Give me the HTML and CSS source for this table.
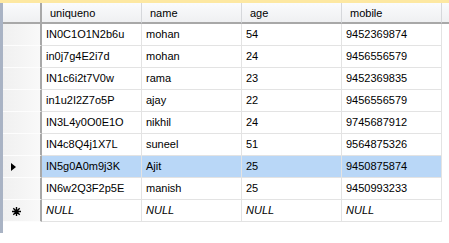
FILE: index.html
```html
<!DOCTYPE html>
<html lang="en">
<head>
    <meta charset="UTF-8">
    <title>Results</title>
    <link rel="stylesheet" href="styles.css">
</head>
<body>
    <div class="tab-line"></div>
    <div class="pane">
        <table class="results">
            <colgroup>
                <col class="col-rowhead">
                <col class="col-data">
                <col class="col-data">
                <col class="col-data">
                <col class="col-data">
                <col class="col-filler">
            </colgroup>
            <thead>
                <tr>
                    <th class="corner"></th>
                    <th>uniqueno</th>
                    <th>name</th>
                    <th>age</th>
                    <th>mobile</th>
                    <th class="filler"></th>
                </tr>
            </thead>
            <tbody>
                <tr>
                    <td class="rowhead"></td>
                    <td>IN0C1O1N2b6u</td><td>mohan</td><td>54</td><td>9452369874</td>
                    <td class="filler"></td>
                </tr>
                <tr>
                    <td class="rowhead"></td>
                    <td>in0j7g4E2i7d</td><td>mohan</td><td>24</td><td>9456556579</td>
                    <td class="filler"></td>
                </tr>
                <tr>
                    <td class="rowhead"></td>
                    <td>IN1c6i2t7V0w</td><td>rama</td><td>23</td><td>9452369835</td>
                    <td class="filler"></td>
                </tr>
                <tr>
                    <td class="rowhead"></td>
                    <td>in1u2I2Z7o5P</td><td>ajay</td><td>22</td><td>9456556579</td>
                    <td class="filler"></td>
                </tr>
                <tr>
                    <td class="rowhead"></td>
                    <td>IN3L4y0O0E1O</td><td>nikhil</td><td>24</td><td>9745687912</td>
                    <td class="filler"></td>
                </tr>
                <tr>
                    <td class="rowhead"></td>
                    <td>IN4c8Q4j1X7L</td><td>suneel</td><td>51</td><td>9564875326</td>
                    <td class="filler"></td>
                </tr>
                <tr class="selected">
                    <td class="rowhead"><span class="current-arrow"></span></td>
                    <td>IN5g0A0m9j3K</td><td>Ajit</td><td>25</td><td>9450875874</td>
                    <td class="filler"></td>
                </tr>
                <tr>
                    <td class="rowhead"></td>
                    <td>IN6w2Q3F2p5E</td><td>manish</td><td>25</td><td>9450993233</td>
                    <td class="filler"></td>
                </tr>
                <tr class="new-row">
                    <td class="rowhead">
                        <svg class="new-star" width="9" height="9" viewBox="0 0 9 9">
                            <path d="M4.5 0v9M0 4.5h9M1.3 1.3l6.4 6.4M7.7 1.3l-6.4 6.4" stroke="#000" stroke-width="1.4"/>
                        </svg>
                    </td>
                    <td>NULL</td><td>NULL</td><td>NULL</td><td>NULL</td>
                    <td class="filler"></td>
                </tr>
            </tbody>
        </table>
    </div>
</body>
</html>
```

FILE: styles.css
```css
* {
    margin: 0;
    padding: 0;
    box-sizing: border-box;
}

body {
    font-family: "Liberation Sans", Arial, sans-serif;
    font-size: 11px;
    color: #000;
    background: #fff;
    width: 449px;
    height: 243px;
    overflow: hidden;
}

.tab-line {
    height: 3px;
    background: #fde8a2;
}

.pane {
    height: 230px;
    border-left: 3px solid #a9b3c4;
    background: #fff;
}

.results {
    border-collapse: separate;
    border-spacing: 0;
    table-layout: fixed;
    width: 446px;
}

.col-rowhead { width: 39px; }
.col-data { width: 100px; }
.col-filler { width: 7px; }

.results th {
    height: 21px;
    padding: 0 8px;
    text-align: left;
    font-weight: normal;
    background: linear-gradient(#fafbfc, #eff0f2);
    border-right: 1px solid #d6d8db;
    border-bottom: 2px solid #a8a8a8;
    line-height: 18px;
    white-space: nowrap;
}

.results th.corner {
    border-right: 2px solid #a8a8a8;
}

.results th.filler {
    border-right: none;
}

.results td {
    height: 22px;
    padding: 0 4px;
    line-height: 21px;
    border-right: 1px solid #e3e3e3;
    border-bottom: 1px solid #e3e3e3;
    white-space: nowrap;
    overflow: hidden;
}

.results td.rowhead {
    position: relative;
    background: linear-gradient(to right, #f0f0f0, #f9f9f9);
    border-right: 2px solid #a8a8a8;
    border-bottom: 1px solid #fdfdfd;
}

.results td.filler {
    border: none;
    background: #fff;
}

.selected td {
    background: #b9d7f7;
}

.current-arrow {
    position: absolute;
    left: 8px;
    top: 7px;
    width: 0;
    height: 0;
    border-top: 4.5px solid transparent;
    border-bottom: 4.5px solid transparent;
    border-left: 5px solid #000;
}

.new-star {
    position: absolute;
    left: 9px;
    top: 7px;
}

.new-row td {
    font-style: italic;
}
```
